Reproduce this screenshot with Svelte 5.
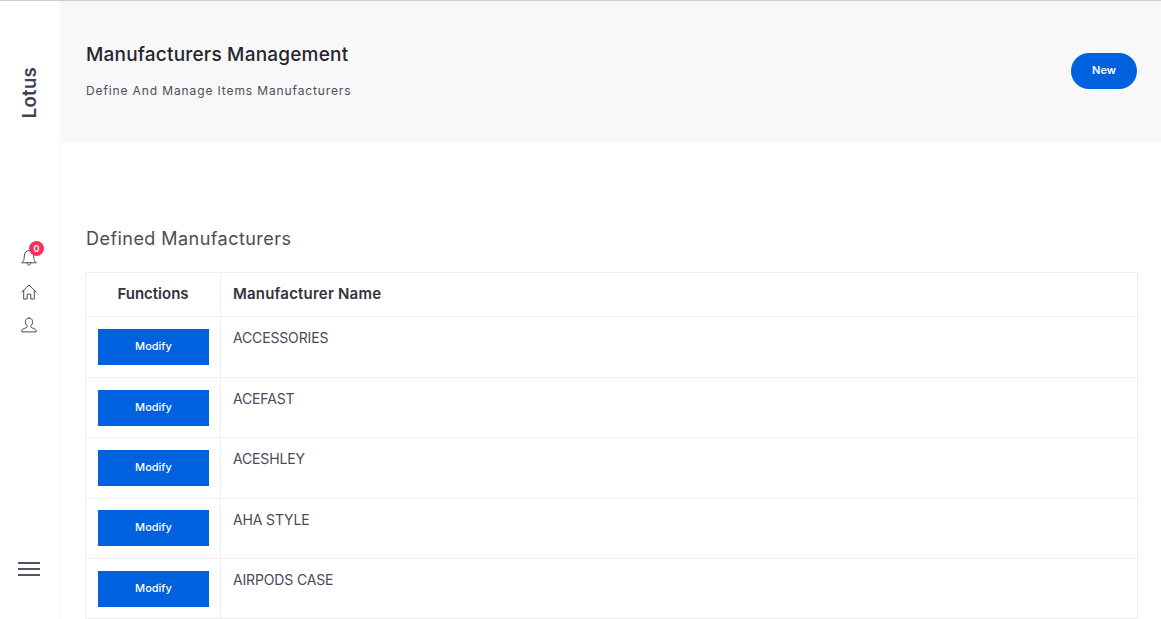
<script>
  const rows = ['ACCESSORIES', 'ACEFAST', 'ACESHLEY', 'AHA STYLE', 'AIRPODS CASE'];
</script>

<div class="page">
  <aside class="side">
    <div class="brand">Lotus</div>
    <nav class="icons">
      <a class="ico bell" href="#a" aria-label="Notifications">
        <svg width="16" height="17" viewBox="0 0 16 17" fill="none" stroke="#4a4a55" stroke-width="1" stroke-linejoin="round" stroke-linecap="round">
          <path d="M1 13.5c1.4-1.2 2-2.2 2.1-4.2L3.4 6c.2-2.6 2.2-4.4 4.6-4.4s4.4 1.800 4.600 4.400l.3 3.300c.1 2 .7 3 2.100 4.200z" />
          <path d="M6 13.700c.1 1.500 1 2.300 2 2.300s1.900-.8 2-2.300" />
        </svg>
        <span class="badge">0</span>
      </a>
      <a class="ico" href="#b" aria-label="Home">
        <svg width="16" height="16" viewBox="0 0 16 16" fill="none" stroke="#4a4a55" stroke-width="1" stroke-linejoin="round" stroke-linecap="round">
          <path d="M.8 8 8 1l7.200 7" />
          <path d="M2.700 6.500V15h3.500v-4.800h3.600V15h3.500V6.500" />
        </svg>
      </a>
      <a class="ico" href="#c" aria-label="Profile">
        <svg width="16" height="16" viewBox="0 0 16 16" fill="none" stroke="#4a4a55" stroke-width="1" stroke-linejoin="round" stroke-linecap="round">
          <path d="M8 1c-2.200 0-3.600 1.500-3.600 3.700 0 1.700.7 3.200 1.600 4 .3.300.3 1.300-.2 1.700-1 .7-4.500 1.300-5 3v1.500h14.400v-1.500c-.5-1.700-4-2.300-5-3-.5-.4-.5-1.400-.2-1.700.9-.8 1.600-2.300 1.600-4C11.600 2.500 10.200 1 8 1z" />
        </svg>
      </a>
    </nav>
    <button class="burger" aria-label="Menu"><i></i><i></i><i></i></button>
  </aside>

  <main class="main">
    <header class="head">
      <div>
        <h1>Manufacturers Management</h1>
        <p>Define And Manage Items Manufacturers</p>
      </div>
      <button class="new">New</button>
    </header>

    <section class="content">
      <h2>Defined Manufacturers</h2>
      <table>
        <thead>
          <tr><th class="fn">Functions</th><th>Manufacturer Name</th></tr>
        </thead>
        <tbody>
          {#each rows as name}
            <tr>
              <td class="fn"><button class="modify">Modify</button></td>
              <td>{name}</td>
            </tr>
          {/each}
        </tbody>
      </table>
    </section>
  </main>
</div>

<style>
  :global(body) { margin: 0; background: #fff; }
  :global(html), :global(body) { overflow: hidden; }
  .page {
    display: flex;
    height: 619px;
    box-sizing: border-box;
    border-top: 1px solid #ccc;
    font-family: "Inter", "Liberation Sans", sans-serif;
    color: #3a3a45;
    overflow: hidden;
  }
  .side {
    width: 60px;
    flex: none;
    box-sizing: border-box;
    padding-right: 2px;
    display: flex;
    flex-direction: column;
    align-items: center;
  }
  .brand {
    writing-mode: vertical-rl;
    transform: rotate(180deg);
    margin-top: 66px;
    font-size: 18.500px;
    font-weight: 600;
    line-height: 24px;
    color: #3f4254;
    letter-spacing: 0.3px;
  }
  .icons {
    margin-top: 131px;
    display: flex;
    flex-direction: column;
    gap: 17px;
    align-items: center;
  }
  .ico { position: relative; display: block; width: 16px; height: 16px; }
  .ico svg { display: block; }
  .ico.bell { margin-bottom: 2px; }
  .badge {
    position: absolute;
    top: -8px;
    left: 8px;
    width: 15px;
    height: 15px;
    border-radius: 50%;
    background: #fb2f5b;
    color: #fff;
    font-size: 9px;
    font-weight: 600;
    line-height: 15px;
    text-align: center;
  }
  .burger {
    margin-top: auto;
    margin-bottom: 43px;
    padding: 0;
    border: 0;
    background: none;
    width: 22px;
    display: flex;
    flex-direction: column;
    gap: 4px;
  }
  .burger i { display: block; height: 2px; background: #54545f; }
  .main { flex: 1; min-width: 0; display: flex; flex-direction: column; }
  .head {
    height: 141px;
    flex: none;
    box-sizing: border-box;
    background: #f8f8f8;
    display: flex;
    align-items: center;
    justify-content: space-between;
    padding: 0 24px 2px 26px;
  }
  h1 {
    margin: 1px 0 14px;
    font-size: 19px;
    line-height: 26px;
    font-weight: 500;
    letter-spacing: 0.2px;
    color: #26262f;
  }
  p {
    margin: 0;
    font-size: 12px;
    line-height: 18px;
    letter-spacing: 0.88px;
    color: #4d4d5a;
  }
  .new {
    width: 66px;
    height: 36px;
    margin-top: 1px;
    padding: 0 0 2px;
    border: 0;
    border-radius: 18px;
    background: #0061df;
    color: #fff;
    font: 600 11px "Inter", sans-serif;
  }
  .content {
    flex: 1;
    padding: 84px 23px 0 24px;
    border-left: 1px solid #f5f5f5;
  }
  h2 {
    margin: 0 0 20px;
    padding-left: 1px;
    font-size: 18px;
    line-height: 26px;
    font-weight: 400;
    letter-spacing: 0.45px;
    color: #4c4c55;
  }
  table {
    width: 100%;
    border-collapse: collapse;
    table-layout: fixed;
    font-size: 14px;
  }
  th, td {
    border: 1px solid #efefef;
    padding: 0 12px;
    text-align: left;
    box-sizing: border-box;
  }
  th { height: 44.400px; padding-bottom: 2px; font-weight: 600; color: #33333c; font-size: 15px; letter-spacing: 0.2px; }
  th.fn { letter-spacing: 0; }
  td {
    height: 60.400px;
    vertical-align: top;
    padding-top: 11px;
    line-height: 20px;
    letter-spacing: -0.15px;
    color: #4a4a58;
  }
  .fn { width: 135px; text-align: center; }
  td.fn { padding-top: 11.800px; }
  .modify {
    display: block;
    width: 111px;
    height: 36px;
    padding: 0 0 2px;
    border: 0;
    background: #0061df;
    color: #fff;
    font: 500 11px "Inter", sans-serif;
  }
</style>
